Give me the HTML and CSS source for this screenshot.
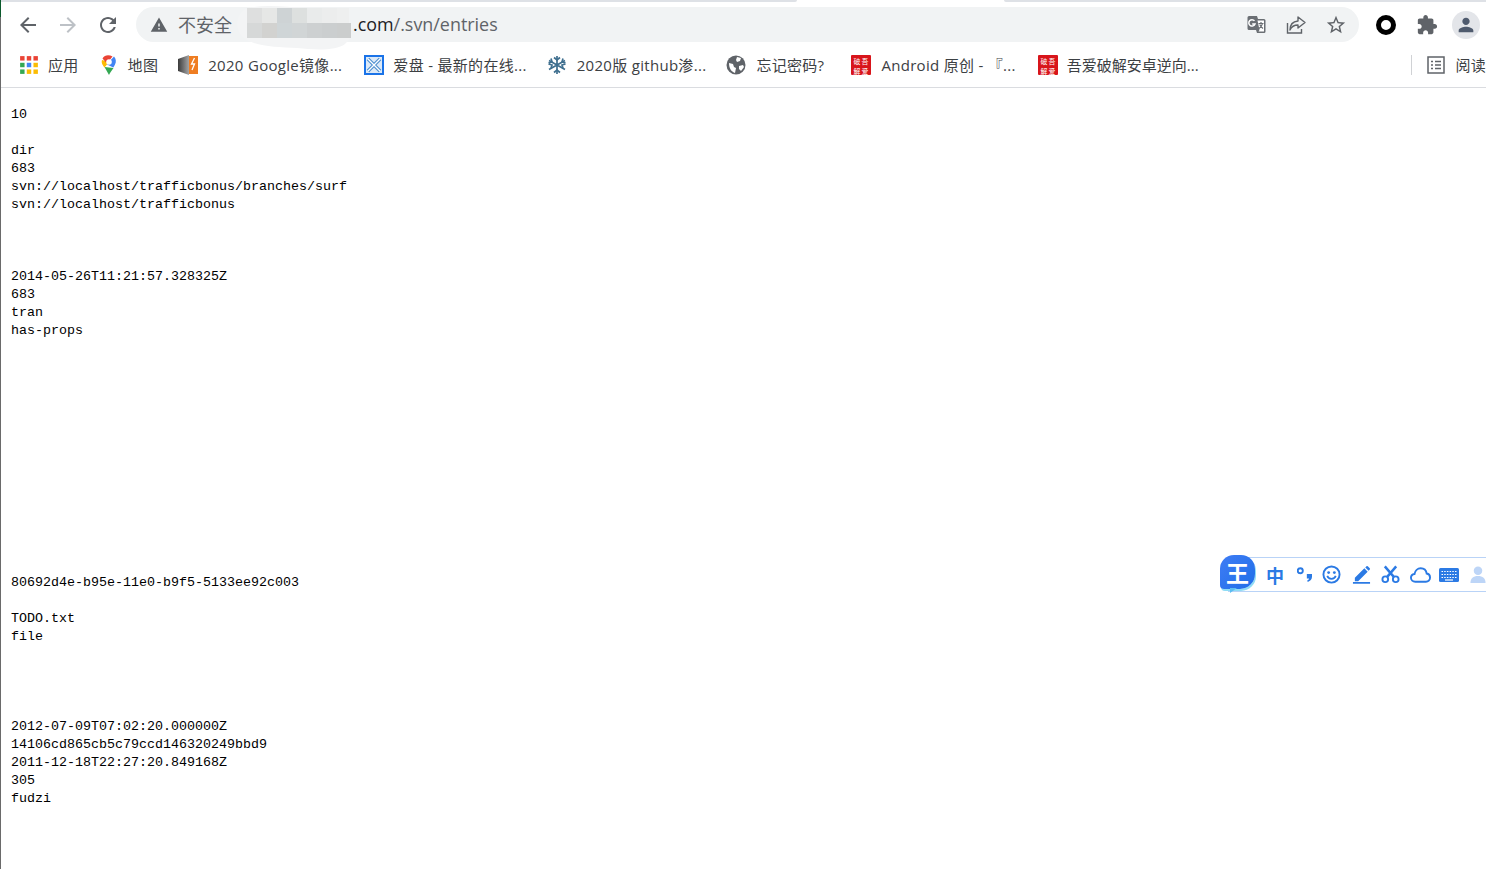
FILE: index.html
```
<!DOCTYPE html>
<html lang="zh-CN">
<head>
<meta charset="utf-8">
<title>entries</title>
<link rel="stylesheet" href="styles.css">
</head>
<body>
<div class="page">
  <div class="tabstrip"><div class="tab-start"></div><div class="tab-active"></div><div class="tab-end"></div></div>
  <header class="toolbar">
    <svg class="nav-icon" viewBox="0 0 24 24"><path fill="#5f6368" d="M20 11H7.830l5.590-5.590L12 4l-8 8 8 8 1.410-1.410L7.830 13H20v-2z"/></svg>
    <svg class="nav-icon" viewBox="0 0 24 24"><path fill="#bdc1c6" d="M4 11h12.170l-5.590-5.590L12 4l8 8-8 8-1.410-1.410L16.170 13H4v-2z"/></svg>
    <svg class="nav-icon" viewBox="0 0 24 24"><path fill="#5f6368" d="M17.650 6.350C16.200 4.900 14.210 4 12 4c-4.420 0-7.990 3.580-7.990 8s3.570 8 7.990 8c3.730 0 6.840-2.550 7.730-6h-2.080c-.82 2.330-3.040 4-5.650 4-3.310 0-6-2.690-6-6s2.690-6 6-6c1.660 0 3.140.69 4.220 1.780L13 11h7V4l-2.350 2.350z"/></svg>
    <div class="omnibox">
      <svg class="warn-icon" viewBox="0 0 24 24"><path fill="#5f6368" d="M1 21h22L12 2 1 21zm12-3h-2v-2h2v2zm0-4h-2v-4h2v4z"/></svg>
      <span class="not-secure">不安全</span>
      <span class="url"><span class="url-host">.com</span>/.svn/entries</span>
      <svg class="blur-patch" viewBox="0 0 116 46">
        <path fill="#f3f4f5" d="M12 3C30-1 50 2 70 3c15 1 32 3 40 11 7 8 7 18-1 25-9 7-30 6-48 4C40 42 20 42 8 33-2 25-1 8 12 3z"/>
        <rect class="c11" x="11" y="3" width="15" height="15"/><rect class="c12" x="26" y="3" width="15" height="15"/><rect class="c13" x="41" y="3" width="15" height="15"/><rect class="c14" x="56" y="3" width="15" height="15"/><rect class="c15" x="71" y="3" width="15" height="15"/><rect class="c16" x="86" y="3" width="15" height="15"/><rect class="c17" x="101" y="3" width="12" height="15"/>
        <rect class="c21" x="11" y="18" width="15" height="15"/><rect class="c22" x="26" y="18" width="15" height="15"/><rect class="c23" x="41" y="18" width="15" height="15"/><rect class="c24" x="56" y="18" width="15" height="15"/><rect class="c25" x="71" y="18" width="15" height="15"/><rect class="c26" x="86" y="18" width="15" height="15"/><rect class="c27" x="101" y="18" width="14" height="15"/>
      </svg>
      <div class="omni-actions">
        <svg class="omni-icon" viewBox="0 0 20 20"><path fill="#6b6f74" d="M2 1h8l1 3h6a1.500 1.500 0 0 1 1.500 1.500v11A1.500 1.500 0 0 1 17 18H10l-1-3H2A1.500 1.500 0 0 1 .5 13.500v-11A1.500 1.500 0 0 1 2 1z"/><path fill="#fff" d="M10.500 5.500H17v11h-5.500l1-1.500z"/><path fill="none" stroke="#6b6f74" stroke-width="1.200" d="M11.500 8.500h5M14 7v1.500M15.500 8.500c-.5 2.500-2 4-3.500 5M12.800 9.500c.6 1.600 1.800 3 3.200 4"/><path fill="none" stroke="#fff" stroke-width="1.500" d="M7.500 5.800A3.200 3.200 0 1 0 8 9H5.200"/></svg>
        <svg class="omni-icon" viewBox="0 0 20 20"><path fill="none" stroke="#5f6368" stroke-width="1.400" d="M1.500 8v10h14v-4"/><path fill="none" stroke="#5f6368" stroke-width="1.400" stroke-linejoin="round" d="M12 2l7 5.500-7 5.500V10C8 10 5.500 11.500 4 15c0-5 3-8.500 8-9z"/></svg>
        <svg class="omni-star" viewBox="0 0 24 24"><path fill="#5f6368" d="M22 9.240l-7.190-.62L12 2 9.190 8.630 2 9.240l5.460 4.730L5.820 21 12 17.270 18.180 21l-1.630-7.030L22 9.240zM12 15.400l-3.760 2.270 1-4.280-3.320-2.880 4.380-.38L12 6.100l1.710 4.040 4.380.38-3.320 2.880 1 4.280L12 15.400z"/></svg>
      </div>
    </div>
    <div class="ext-ring"></div>
    <svg class="puzzle" viewBox="0 0 24 24"><path fill="#5f6368" d="M20.500 11H19V7c0-1.100-.9-2-2-2h-4V3.500C13 2.120 11.880 1 10.500 1S8 2.120 8 3.500V5H4c-1.100 0-1.990.9-1.990 2v3.800H3.500c1.490 0 2.700 1.210 2.700 2.700s-1.210 2.700-2.700 2.700H2V20c0 1.100.9 2 2 2h3.800v-1.500c0-1.490 1.210-2.700 2.700-2.700 1.490 0 2.700 1.210 2.700 2.700V22H17c1.100 0 2-.9 2-2v-4h1.500c1.380 0 2.500-1.120 2.500-2.500S21.880 11 20.500 11z"/></svg>
    <div class="avatar"><svg viewBox="0 0 24 24"><path fill="#4f5b6e" d="M12 12c2.210 0 4-1.790 4-4s-1.790-4-4-4-4 1.790-4 4 1.790 4 4 4zm0 2c-2.670 0-8 1.340-8 4v2h16v-2c0-2.660-5.330-4-8-4z"/></svg></div>
  </header>
  <nav class="bookmarks">
    <a class="bm bm-apps">
      <svg class="fav" viewBox="0 0 18 18"><rect fill="#ea4335" x="1" y="1" width="4" height="4"/><rect fill="#ea4335" x="7" y="1" width="4" height="4"/><rect fill="#ea4335" x="13" y="1" width="4" height="4"/><rect fill="#34a853" x="1" y="7" width="4" height="4"/><rect fill="#4285f4" x="7" y="7" width="4" height="4"/><rect fill="#fbbc04" x="13" y="7" width="4" height="4"/><rect fill="#34a853" x="1" y="13" width="4" height="4"/><rect fill="#fbbc04" x="7" y="13" width="4" height="4"/><rect fill="#fbbc04" x="13" y="13" width="4" height="4"/></svg>
      <span>应用</span>
    </a>
    <a class="bm bm-map">
      <svg class="fav" viewBox="0 0 18 20"><path fill="#34a853" d="M4.500 12L9 20c1-2.500 3-4.500 4.500-7z"/><path fill="#fbbc04" d="M2 5C1 8 3 10.500 4.500 12.500L9 7z"/><path fill="#ea4335" d="M2.500 3.500L6 7.500 9 6l3.500-4.500C9-.5 4.500-.2 2.500 3.500z"/><path fill="#4285f4" d="M9 7l5-5.500c2 2 2.500 5.500 1 8-.5 1-1 2-1.700 3L7 9.500z"/><circle fill="#fff" cx="9" cy="7" r="2.800"/></svg>
      <span>地图</span>
    </a>
    <a class="bm bm-google">
      <svg class="fav" viewBox="0 0 20 20"><defs><linearGradient id="grey" x1="0" x2="1"><stop offset="0" stop-color="#3b3b3b"/><stop offset="1" stop-color="#a5a5a5"/></linearGradient></defs><path fill="url(#grey)" d="M0 4l11-4v20L0 16z"/><rect fill="#ef7d22" x="11" y="1" width="9" height="18"/><path fill="none" stroke="#fff" stroke-width="1.300" d="M16.500 3l-3 6h3l-2.500 6"/></svg>
      <span>2020 Google镜像...</span>
    </a>
    <a class="bm bm-aipan">
      <svg class="fav" viewBox="0 0 20 20"><rect fill="#1a73e8" width="20" height="20"/><rect fill="#dce9f7" x="2" y="2" width="16" height="16"/><path fill="none" stroke="#4d8fd0" stroke-width="3.500" d="M4 4l12 12M16 4L4 16"/><path fill="none" stroke="#fff" stroke-width="1.300" d="M4 4l12 12M16 4L4 16"/></svg>
      <span>爱盘 - 最新的在线...</span>
    </a>
    <a class="bm bm-github">
      <svg class="fav" viewBox="0 0 20 20"><g fill="none" stroke="#3f6f8f" stroke-width="1.700"><path d="M10 1v18M2 5.500l16 9M18 5.500l-16 9"/><path d="M7 2.500l3 2.500 3-2.500M7 17.500l3-2.500 3 2.500M1.500 9l3.500 1-1 3.500M18.500 9L15 10l1 3.500M4 3.500l1 3.500-3.500 1M16 3.500L15 7l3.500 1"/></g></svg>
      <span>2020版 github渗...</span>
    </a>
    <a class="bm bm-forgot">
      <svg class="fav" viewBox="0 0 20 20"><circle fill="#5f6368" cx="10" cy="10" r="9.500"/><path fill="#fff" d="M3 8l4 1 1 3 2 1-1 5c-3-1-6-4-6-10zM11 2l4 1-1 3-3 1-1-2zM13 11l4-1 1 2-3 4-2-2z"/></svg>
      <span>忘记密码?</span>
    </a>
    <a class="bm bm-android">
      <svg class="fav seal" viewBox="0 0 20 20"><rect fill="#d8151b" width="20" height="20" rx="1"/><text x="2.500" y="8.500">破</text><text x="10.500" y="8.500">吾</text><text x="2.500" y="18.500">解</text><text x="10.500" y="18.500">爱</text></svg>
      <span>Android 原创 - 『...</span>
    </a>
    <a class="bm bm-52">
      <svg class="fav seal" viewBox="0 0 20 20"><rect fill="#d8151b" width="20" height="20" rx="1"/><text x="2.500" y="8.500">破</text><text x="10.500" y="8.500">吾</text><text x="2.500" y="18.500">解</text><text x="10.500" y="18.500">爱</text></svg>
      <span>吾爱破解安卓逆向...</span>
    </a>
    <div class="bm-reader">
      <svg class="reader-icon" viewBox="0 0 18 18"><rect fill="none" stroke="#5f6368" stroke-width="1.500" x="1" y="1" width="16" height="16"/><path fill="none" stroke="#5f6368" stroke-width="1.500" d="M4 5.500h2M8 5.500h6M4 9h2M8 9h6M4 12.500h2M8 12.500h6"/></svg>
      <span>阅读</span>
    </div>
  </nav>
  <main class="content">
<pre class="entries">10

dir
683
svn://localhost/trafficbonus/branches/surf
svn://localhost/trafficbonus



2014-05-26T11:21:57.328325Z
683
tran
has-props













80692d4e-b95e-11e0-b9f5-5133ee92c003

TODO.txt
file




2012-07-09T07:02:20.000000Z
14106cd865cb5c79ccd146320249bbd9
2011-12-18T22:27:20.849168Z
305
fudzi</pre>
  </main>
  <aside class="ime">
    <div class="ime-logo"><span>王</span></div>
    <div class="ime-bar">
      <span class="ime-zh">中</span>
      <svg class="ime-punct" viewBox="0 0 16 16"><circle fill="none" stroke="#2b7ae4" stroke-width="2" cx="3.500" cy="4" r="2.700"/><path fill="#2b7ae4" d="M10.500 7.500H16v3c0 2.800-1.800 4.600-4.500 5.500l-.7-1.500c1.200-.5 1.800-1.200 2-2.300h-2.300z"/></svg>
      <svg class="ime-smile" viewBox="0 0 20 20"><circle fill="none" stroke="#2b7ae4" stroke-width="2" cx="10" cy="10" r="8.500"/><circle fill="#2b7ae4" cx="7" cy="8" r="1.500"/><circle fill="#2b7ae4" cx="13" cy="8" r="1.500"/><path fill="none" stroke="#2b7ae4" stroke-width="1.800" d="M5.500 11.500c1.500 4 7.500 4 9 0"/></svg>
      <svg class="ime-pen" viewBox="0 0 20 20"><path fill="#2b7ae4" d="M3 13.500L13 3.500l3.500 3.500-10 10H3zM14 2.500l1.200-1.200a1 1 0 0 1 1.400 0l2.100 2.100a1 1 0 0 1 0 1.400L17.500 6zM1 18h18v1.800H1z"/></svg>
      <svg class="ime-cut" viewBox="0 0 20 20"><g fill="none" stroke="#2b7ae4"><circle stroke-width="2" cx="4.500" cy="15" r="3"/><circle stroke-width="2" cx="15.500" cy="15" r="3"/><path stroke-width="2.600" d="M6.500 12.500L16 1.500M13.500 12.500L4 1.500"/></g></svg>
      <svg class="ime-cloud" viewBox="0 0 22 16"><path fill="none" stroke="#2b7ae4" stroke-width="2" d="M5.500 15C3 15 1 13.200 1 11c0-2 1.500-3.700 3.700-4C5.300 3.500 8 1 11.200 1c3.200 0 5.800 2.300 6.300 5.500 2 .3 3.500 2.200 3.500 4.200 0 2.400-1.900 4.300-4.300 4.300z"/></svg>
      <svg class="ime-keys" viewBox="0 0 20 14"><rect fill="#2b7ae4" width="20" height="14" rx="1.500"/><path fill="none" stroke="#fff" stroke-width="1.200" stroke-dasharray="1.500 1.200" d="M2.500 3.500h15M2.500 6.500h15M2.500 9.500h15"/><path fill="none" stroke="#fff" stroke-width="1.200" d="M6 12h8"/></svg>
      <svg class="ime-user" viewBox="0 0 16 18"><circle fill="#bdd5f7" cx="8" cy="5" r="4.500"/><path fill="#bdd5f7" d="M0 18c0-5 3-7.500 8-7.500s8 2.500 8 7.500z"/></svg>
    </div>
  </aside>
</div>
</body>
</html>
```

FILE: styles.css
```
* { box-sizing: border-box; }
html, body { margin: 0; padding: 0; height: 100%; background: #fff; overflow: hidden; }
.page {
  position: relative;
  display: flex;
  flex-direction: column;
  height: 869px;
  overflow: hidden;
  border-left: 1px solid;
  border-image: linear-gradient(#0b5a2c 18px, #6a6a6a 18px) 1;
  font-family: "Open Sans", "Noto Sans CJK SC", sans-serif;
}
.tabstrip { display: flex; height: 2px; flex: none; }
.tab-start { width: 796px; background: #dee1e6; border-bottom-right-radius: 4px; }
.tab-active { width: 207px; background: #fff; }
.tab-end { flex: 1; background: #dee1e6; border-bottom-left-radius: 4px; }

.toolbar { display: flex; align-items: center; height: 45px; flex: none; padding: 0 6px 0 15px; }
.nav-icon { width: 24px; height: 24px; margin-right: 16px; flex: none; }
.omnibox {
  position: relative;
  display: flex;
  align-items: center;
  width: 1223px;
  height: 35px;
  padding-left: 14px;
  border-radius: 18px;
  background: #f1f3f4;
  font-size: 18px;
  color: #5f6368;
  flex: none;
}
.warn-icon { width: 18px; height: 18px; flex: none; margin-right: 10px; }
.not-secure { color: #5f6368; margin-right: 121px; font-size: 18px; padding-bottom: 2px; }
.url { font-size: 17.900px; white-space: nowrap; padding-bottom: 2px; }
.url-host { color: #202124; }
.blur-patch { position: absolute; left: 100px; top: -2px; width: 116px; height: 46px; }
.c11 { fill: #dedfdf; } .c12 { fill: #e6e7e6; } .c13 { fill: #ced3d5; } .c14 { fill: #dde0df; }
.c15 { fill: #e9ebeb; } .c16 { fill: #eceded; } .c17 { fill: #eeefef; }
.c21 { fill: #d6d8d8; } .c22 { fill: #d2d2d0; } .c23 { fill: #cfd5d7; } .c24 { fill: #d1d5d6; }
.c25 { fill: #cdd0d1; } .c26 { fill: #cbcecf; } .c27 { fill: #cbcdcd; }
.omni-actions { display: flex; align-items: center; gap: 19px; margin-left: auto; margin-right: 12px; }
.omni-icon { width: 20px; height: 20px; flex: none; }
.omni-star { width: 22px; height: 22px; flex: none; }
.ext-ring { width: 20px; height: 20px; margin-left: 17px; border: 5px solid #000; border-radius: 50%; flex: none; }
.puzzle { width: 22px; height: 22px; margin-left: 20px; flex: none; }
.avatar { display: flex; align-items: center; justify-content: center; width: 28px; height: 28px; margin-left: 14px; border-radius: 50%; background: #e3e5e9; flex: none; }
.avatar svg { width: 22px; height: 22px; }

.bookmarks {
  display: flex;
  align-items: center;
  height: 41px;
  flex: none;
  padding: 0 0 4px 18px;
  border-bottom: 1px solid #dadce0;
  font-size: 15px;
  letter-spacing: .3px;
  color: #3c4043;
  white-space: nowrap;
}
.bookmarks span { padding-bottom: 2px; }
.bm { display: flex; align-items: center; gap: 10px; margin-right: 21px; flex: none; }
.bm-apps { gap: 9px; margin-right: 20px; }
.bm-map { gap: 9px; margin-right: 20px; }
.bm-google { margin-right: 22px; }
.bm-aipan { gap: 9px; margin-right: 20px; }
.bm-github { margin-right: 20px; }
.bm-forgot { margin-right: 27px; }
.bm-android { margin-right: 22px; }
.bm-52 { gap: 9px; letter-spacing: 0; }
.fav { width: 20px; height: 20px; flex: none; }
.seal text { font-size: 6.900px; letter-spacing: 0; font-family: "Noto Sans CJK SC", sans-serif; fill: #fff; }
.bm-reader { display: flex; align-items: center; gap: 10px; margin-left: auto; padding-left: 15px; border-left: 1px solid #d0d2d5; height: 20px; flex: none; }
.reader-icon { width: 18px; height: 18px; flex: none; }

.content { flex: 1; padding: 18px 0 0 10px; }
.entries {
  margin: 0;
  font-family: "Liberation Mono", monospace;
  font-size: 13.333px;
  line-height: 18px;
  color: #000;
}

.ime { position: absolute; left: 1219px; top: 555px; right: 0; height: 38px; display: flex; align-items: flex-start; }
.ime-logo {
  position: absolute;
  left: 0;
  top: 0;
  z-index: 1;
  display: flex;
  align-items: center;
  justify-content: center;
  width: 35px;
  height: 34px;
  border-radius: 14px 14px 15px 4px;
  background: linear-gradient(135deg, #3f7cf5, #1f6fe8);
  box-shadow: 1px 2px 0 #8fdcf5;
  font-family: "Noto Sans CJK SC", sans-serif;
  font-weight: 700;
  font-size: 23px;
  color: #fff;
}
.ime-logo::after {
  content: "";
  position: absolute;
  left: 10px;
  bottom: -4px;
  border-top: 5px solid #5cbdf2;
  border-right: 7px solid transparent;
}
.ime-bar {
  display: flex;
  align-items: center;
  width: 100%;
  height: 35px;
  margin: 2px 0 0 8px;
  padding-left: 37px;
  background: #fff;
  border: 1px solid #b9d3f7;
  border-right: 0;
}
.ime-zh { font-family: "Noto Sans CJK SC", sans-serif; font-weight: 700; font-size: 18px; color: #2b7ae4; width: 20px; flex: none; }
.ime-punct { width: 15px; height: 15px; margin-left: 11px; flex: none; }
.ime-smile { width: 19px; height: 19px; margin-left: 10px; flex: none; }
.ime-pen { width: 19px; height: 19px; margin-left: 11px; flex: none; }
.ime-cut { width: 19px; height: 19px; margin-left: 10px; flex: none; }
.ime-cloud { width: 21px; height: 16px; margin-left: 10px; flex: none; }
.ime-keys { width: 20px; height: 14px; margin-left: 8px; flex: none; }
.ime-user { width: 16px; height: 17px; margin-left: 11px; flex: none; }
```
